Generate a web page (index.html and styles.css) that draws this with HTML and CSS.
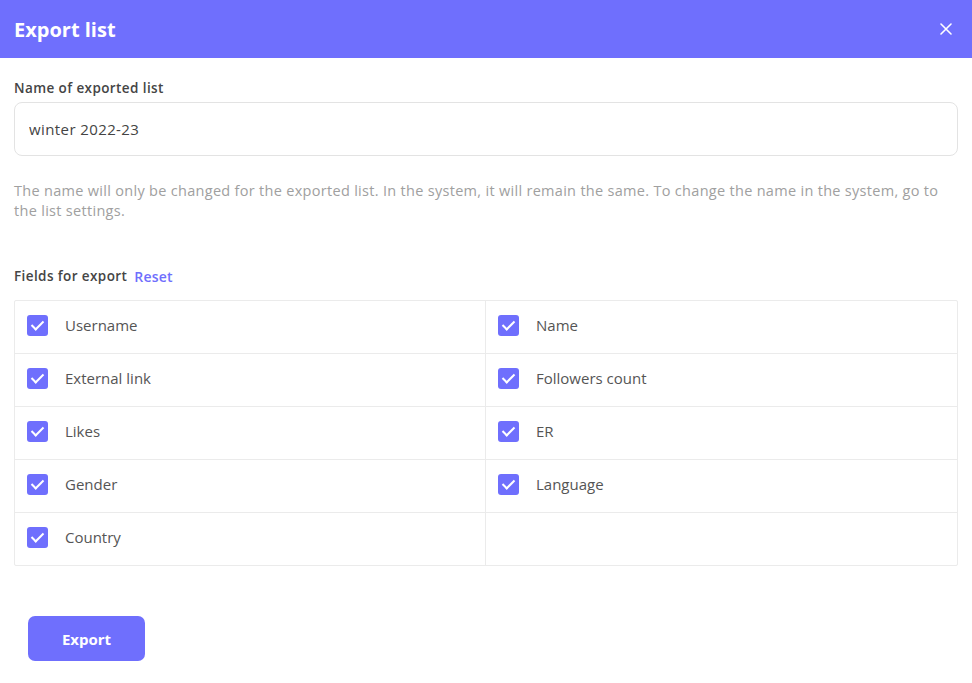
FILE: index.html
```html
<!DOCTYPE html>
<html lang="en">
<head>
  <meta charset="UTF-8">
  <meta name="viewport" content="width=device-width, initial-scale=1.0">
  <title>Export list</title>
  <link rel="stylesheet" href="styles.css">
</head>
<body>
  <div class="modal">
    <!-- Header -->
    <header class="modal-header">
      <h1>Export list</h1>
      <button class="close-btn" aria-label="Close">
        <svg width="12" height="12" viewBox="0 0 12 12"><path d="M1 1 L11 11 M11 1 L1 11" stroke="#fff" stroke-width="1.6" stroke-linecap="round"/></svg>
      </button>
    </header>

    <div class="modal-body">
      <label class="field-label" for="list-name">Name of exported list</label>
      <input id="list-name" class="text-input" type="text" value="winter 2022-23">
      <p class="hint">The name will only be changed for the exported list. In the system, it will remain the same. To change the name in the system, go to the list settings.</p>

      <div class="fields-title">
        <span>Fields for export</span>
        <a href="#" class="reset">Reset</a>
      </div>

      <div class="fields-grid">
        <div class="field-cell"><span class="check"></span>Username</div>
        <div class="field-cell"><span class="check"></span>Name</div>
        <div class="field-cell"><span class="check"></span>External link</div>
        <div class="field-cell"><span class="check"></span>Followers count</div>
        <div class="field-cell"><span class="check"></span>Likes</div>
        <div class="field-cell"><span class="check"></span>ER</div>
        <div class="field-cell"><span class="check"></span>Gender</div>
        <div class="field-cell"><span class="check"></span>Language</div>
        <div class="field-cell"><span class="check"></span>Country</div>
        <div class="field-cell"></div>
      </div>

      <button class="export-btn">Export</button>
    </div>
  </div>
</body>
</html>
```

FILE: styles.css
```css
body {
  margin: 0;
  font-family: "Open Sans", Arial, sans-serif;
  background-color: #ffffff;
  color: #333333;
}
.modal-header {
  height: 58px;
  background-color: #6f6ffd;
  display: flex;
  align-items: center;
  justify-content: space-between;
  padding: 0 20px 0 14px;
}
.modal-header h1 {
  margin: 0;
  font-size: 20px;
  font-weight: 700;
  color: #ffffff;
}
.close-btn {
  background: none;
  border: none;
  padding: 0;
  display: flex;
  cursor: pointer;
}
.modal-body {
  padding: 21px 14px 0 14px;
}
.field-label {
  display: block;
  font-size: 13.5px;
  font-weight: 600;
  letter-spacing: 0.4px;
  color: #454545;
  margin-bottom: 5px;
}
.text-input {
  box-sizing: border-box;
  width: 100%;
  height: 54px;
  border: 1px solid #e3e3e3;
  border-radius: 8px;
  padding: 0 14px;
  font-family: inherit;
  font-size: 15px;
  letter-spacing: 0.4px;
  color: #444444;
  outline: none;
}
.hint {
  margin: 25px 0 0;
  font-size: 14.5px;
  line-height: 20px;
  letter-spacing: 0.3px;
  color: #a0a0a0;
}
.fields-title {
  margin-top: 46px;
  display: flex;
  gap: 7px;
  font-size: 13.5px;
  font-weight: 600;
  letter-spacing: 0.4px;
  color: #454545;
}
.reset {
  color: #6f6ffd;
  text-decoration: none;
  font-size: 14px;
  font-weight: 600;
  letter-spacing: 0.2px;
}
.fields-grid {
  margin-top: 14px;
  display: grid;
  grid-template-columns: 1fr 1fr;
  border: 1px solid #ebebeb;
  border-radius: 2px;
}
.field-cell {
  height: 48px;
  display: flex;
  align-items: center;
  gap: 17px;
  padding-left: 12px;
  padding-bottom: 4px;
  font-size: 15px;
  color: #555555;
  border-bottom: 1px solid #ebebeb;
}
.field-cell:nth-child(odd) {
  border-right: 1px solid #ebebeb;
}
.field-cell:nth-last-child(-n+2) {
  border-bottom: none;
}
.check {
  width: 21px;
  height: 21px;
  border-radius: 3px;
  background-color: #6f6ffd;
  position: relative;
  flex-shrink: 0;
}
.check::after {
  content: "";
  position: absolute;
  left: 7px;
  top: 3px;
  width: 5px;
  height: 10px;
  border: solid #ffffff;
  border-width: 0 2px 2px 0;
  transform: rotate(45deg);
}
.export-btn {
  margin: 50px 0 0 14px;
  width: 117px;
  height: 45px;
  border: none;
  border-radius: 7px;
  background-color: #6f6ffd;
  color: #ffffff;
  font-family: inherit;
  font-size: 15px;
  font-weight: 700;
  cursor: pointer;
}
```
